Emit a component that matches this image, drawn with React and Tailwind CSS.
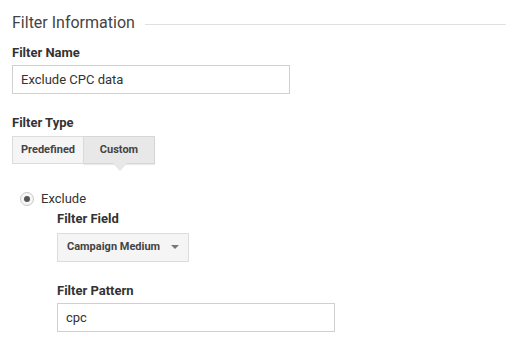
import React from 'react';

const Label = ({ children, className = '' }) => (
  <div className={`text-[13px] font-bold text-[#333] leading-[16px] ${className}`}>{children}</div>
);

const App = () => {
  return (
    <div className="w-[506px] h-[339px] bg-white overflow-hidden px-3 pt-[13px] font-['Roboto',sans-serif] text-[#333]">
      <div className="flex items-center gap-[10px]">
        <h2 className="text-[16px] leading-[20px] text-[#444]">Filter Information</h2>
        <div className="flex-1 h-px bg-[#e0e0e0] -mr-3 mt-[2px]" />
      </div>

      <Label className="mt-[12px]">Filter Name</Label>
      <div className="mt-[4px] w-[278px] h-[29px] border border-[#d0d0d0] flex items-center px-[8px] text-[13px] text-[#333]">
        Exclude CPC data
      </div>

      <Label className="mt-[21px]">Filter Type</Label>
      <div className="mt-[5px] flex">
        <button className="h-[28px] w-[72px] bg-[#f5f5f5] border border-[#dcdcdc] text-[11px] font-bold text-[#444]">
          Predefined
        </button>
        <div className="relative">
          <button className="h-[28px] w-[71px] bg-[#e8e8e8] border border-l-0 border-[#d6d6d6] text-[11px] font-bold text-[#444] shadow-[0_1px_1px_rgba(0,0,0,0.08)]">
            Custom
          </button>
          <div className="absolute left-[29px] top-[27px] w-0 h-0 border-l-[7px] border-r-[7px] border-t-[8px] border-l-transparent border-r-transparent border-t-[#e0e0e0]" />
          <div className="absolute left-[30px] top-[27px] w-0 h-0 border-l-[6px] border-r-[6px] border-t-[7px] border-l-transparent border-r-transparent border-t-[#e8e8e8]" />
        </div>
      </div>

      <div className="mt-[25px] ml-[8px] flex items-center gap-[7px]">
        <span className="w-[14px] h-[14px] rounded-full border border-[#c8c8c8] bg-[#f5f5f5] flex items-center justify-center">
          <span className="w-[6px] h-[6px] rounded-full bg-[#555]" />
        </span>
        <span className="text-[13px] text-[#333]">Exclude</span>
      </div>

      <div className="ml-[45px]">
        <Label className="mt-[2px]">Filter Field</Label>
        <div className="mt-[6px] w-[132px] h-[29px] bg-[#f5f5f5] border border-[#dcdcdc] flex items-center justify-between pl-[9px] pr-[9px]">
          <span className="text-[11px] font-bold text-[#444]">Campaign Medium</span>
          <span className="w-0 h-0 border-l-[4px] border-r-[4px] border-t-[4px] border-l-transparent border-r-transparent border-t-[#777]" />
        </div>

        <Label className="mt-[21px]">Filter Pattern</Label>
        <div className="mt-[4px] w-[278px] h-[29px] border border-[#d0d0d0] flex items-center px-[8px] text-[13px] text-[#333]">
          cpc
        </div>
      </div>
    </div>
  );
};

export default App;
